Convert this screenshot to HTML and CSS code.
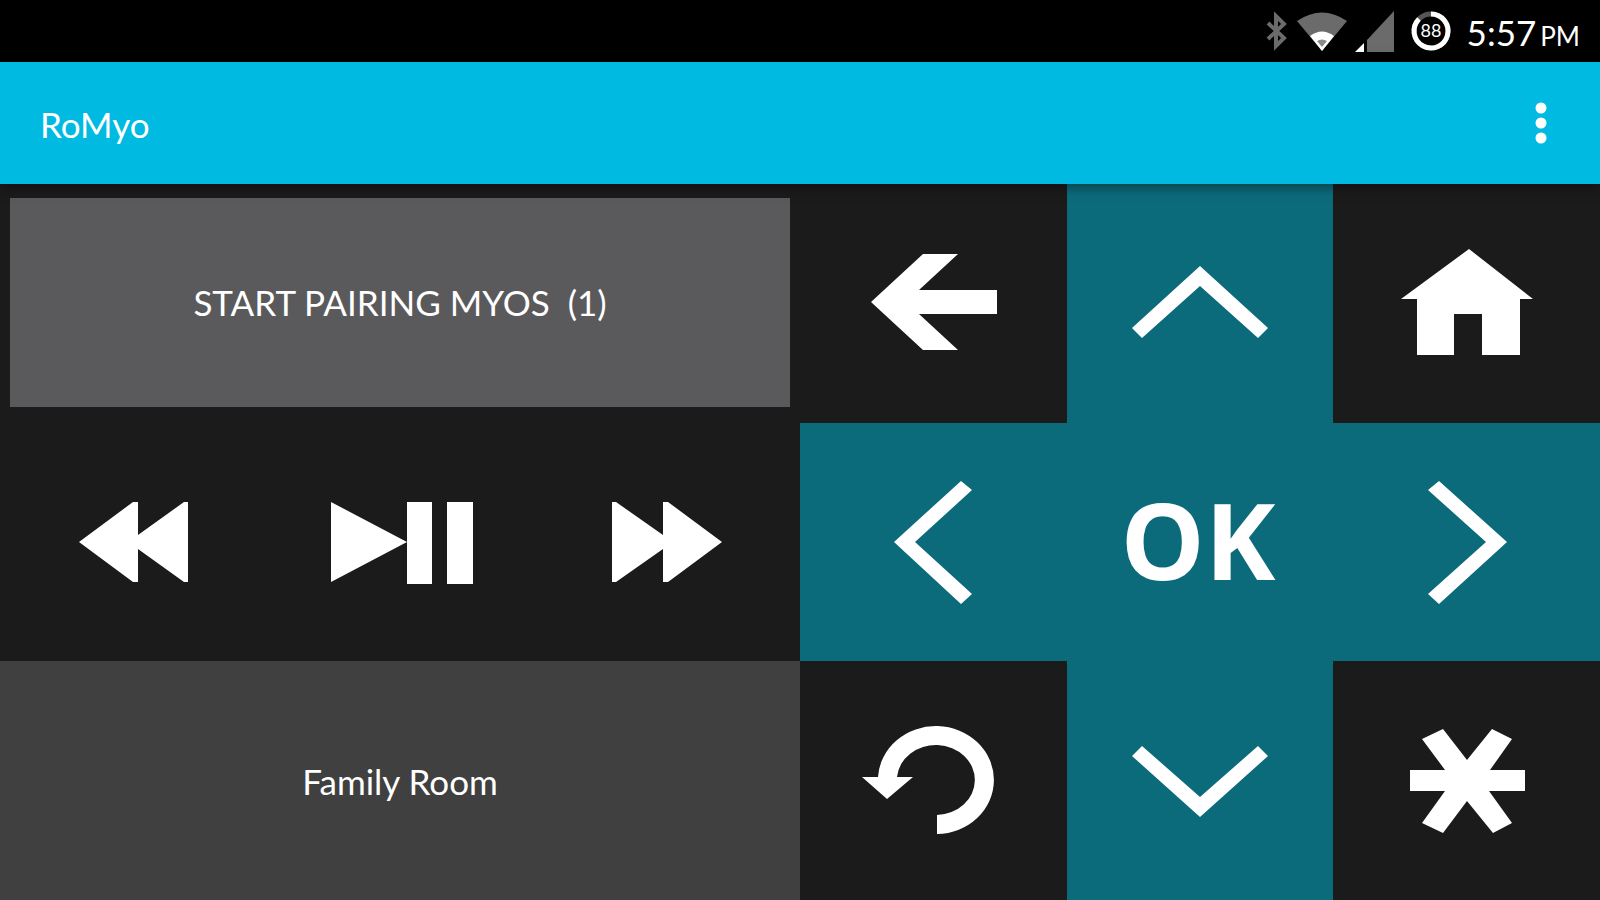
FILE: index.html
```html
<!DOCTYPE html>
<html lang="en">
<head>
    <meta charset="UTF-8">
    <meta name="viewport" content="width=device-width, initial-scale=1.0">
    <title>RoMyo</title>
    <link rel="stylesheet" href="styles.css">
</head>
<body>

    <div class="status-bar">
        <svg width="24" height="44" viewBox="0 0 24 44">
            <path d="M3 14 L19 29 L11 37 V7 L19 15 L3 30" fill="none" stroke="#6b6b6b" stroke-width="4"/>
        </svg>
        <svg width="50" height="44" viewBox="0 0 50 44">
            <path d="M0 12 Q25 -5 50 12 L25 42 Z" fill="#6b6b6b"/>
            <path d="M13 27 Q25 18 37 27 L25 42 Z" fill="#fff"/>
            <path d="M20 32 Q25 29 30 32 L25 38 Z" fill="#8a8a8a"/>
        </svg>
        <svg width="40" height="44" viewBox="0 0 40 44">
            <path d="M39 2 V43 H12 V31 Z" fill="#6b6b6b"/>
            <path d="M9 34 V43 H0 Z" fill="#fff"/>
        </svg>
        <svg width="56" height="44" viewBox="0 0 56 44">
            <circle cx="28" cy="22" r="17" fill="none" stroke="#555" stroke-width="5"/>
            <path d="M28 5 A17 17 0 1 1 16 10" fill="none" stroke="#fff" stroke-width="5"/>
            <text class="battery-level" x="28" y="28" text-anchor="middle">88</text>
        </svg>
        <div class="clock">5:57<span class="clock-period">PM</span></div>
    </div>

    <header class="app-bar">
        <h1 class="app-title">RoMyo</h1>
        <button class="menu-button" type="button" aria-label="More options">
            <svg width="12" height="42" viewBox="0 0 12 42">
                <circle cx="6" cy="5" r="5.5"/>
                <circle cx="6" cy="20" r="5.5"/>
                <circle cx="6" cy="35" r="5.5"/>
            </svg>
        </button>
    </header>

    <main class="remote">
        <section class="panel">
            <button class="pair-button" type="button">START PAIRING MYOS&nbsp; (1)</button>

            <div class="media-row">
                <button class="key" type="button" aria-label="Rewind">
                    <svg class="icon" viewBox="0 0 160 160"><path d="M26 80 L80 40 H85 V73 L131 40 H135 V120 H131 L85 87 V120 H80 Z"/></svg>
                </button>
                <button class="key" type="button" aria-label="Play or pause">
                    <svg class="icon" viewBox="0 0 160 160"><path d="M11 40 L87 80 L11 120 Z M87 40 H112 V122 H87 Z M127 40 H153 V122 H127 Z"/></svg>
                </button>
                <button class="key" type="button" aria-label="Fast forward">
                    <svg class="icon" viewBox="0 0 160 160"><path d="M25 40 H29 L76 73 V40 H81 L135 80 L81 120 H76 V87 L29 120 H25 Z"/></svg>
                </button>
            </div>

            <button class="device-button" type="button">Family Room</button>
        </section>

        <section class="pad">
            <button class="key" type="button" aria-label="Back">
                <svg class="icon" viewBox="0 0 160 160"><path d="M18 79 L70 31 H105 L66 67 H144 V91 H66 L105 127 H70 Z"/></svg>
            </button>
            <button class="key key-teal" type="button" aria-label="Up">
                <svg class="icon" viewBox="0 0 160 160"><path d="M80 43 L148 105 L138 115 L80 63 L22 115 L12 105 Z"/></svg>
            </button>
            <button class="key" type="button" aria-label="Home">
                <svg class="icon" viewBox="0 0 160 160"><path d="M82 26 L146 76 H133 V132 H95 V91 H67 V132 H30 V76 H14 Z"/></svg>
            </button>

            <button class="key key-teal" type="button" aria-label="Left">
                <svg class="icon" viewBox="0 0 160 160"><path d="M41 80 L108 19 L119 28 L62 80 L119 132 L108 142 Z"/></svg>
            </button>
            <button class="key key-teal key-ok" type="button">OK</button>
            <button class="key key-teal" type="button" aria-label="Right">
                <svg class="icon" viewBox="0 0 160 160"><path d="M120 80 L52 19 L41 28 L99 80 L41 132 L52 142 Z"/></svg>
            </button>

            <button class="key" type="button" aria-label="Replay">
                <svg class="icon" viewBox="0 0 160 160"><path d="M25 76 A58 54 0 1 1 84 133 V114 A39 35 0 1 0 44 76 H60 L34 98 L9 76 Z"/></svg>
            </button>
            <button class="key key-teal" type="button" aria-label="Down">
                <svg class="icon" viewBox="0 0 160 160"><path d="M12 55 L22 45 L80 96 L138 45 L148 55 L80 116 Z"/></svg>
            </button>
            <button class="key" type="button" aria-label="Options">
                <svg class="icon" viewBox="0 0 160 160"><path d="M23 69 H58 L35 38 L56 28 L80 59 L105 28 L125 38 L103 69 H138 V90 H102 L125 122 L106 132 L80 100 L56 132 L35 122 L58 90 H23 Z"/></svg>
            </button>
        </section>
    </main>

</body>
</html>
```
FILE: styles.css
```css
* {
    box-sizing: border-box;
}
body {
    display: flex;
    flex-direction: column;
    min-height: 100vh;
    margin: 0;
    background: #1b1b1b;
    color: #fff;
    font-family: Lato, "Open Sans", sans-serif;
    font-size: 35px;
}
button {
    padding: 0;
    border: none;
    background: none;
    color: inherit;
    font: inherit;
    cursor: pointer;
}
.status-bar {
    display: flex;
    align-items: center;
    justify-content: flex-end;
    gap: 8px;
    height: 62px;
    padding-right: 20px;
    background: #000;
}
.battery-level {
    fill: #fff;
    font-size: 18px;
}
.clock {
    padding-top: 6px;
    line-height: 44px;
}
.clock-period {
    margin-left: 4px;
    font-size: 26px;
}
.app-bar {
    position: relative;
    display: flex;
    align-items: center;
    justify-content: space-between;
    height: 122px;
    padding: 2px 39px 0 40px;
    background: #00bae2;
    box-shadow: 0 2px 12px rgba(0,0,0,0.5);
}
.app-title {
    margin: 0;
    font-size: 35px;
    font-weight: normal;
}
.menu-button {
    width: 40px;
    height: 60px;
}
.menu-button svg {
    display: block;
    margin: auto;
    overflow: visible;
    fill: #fff;
}
.remote {
    flex: 1;
    display: grid;
    grid-template-columns: 1fr 1fr;
}
.panel {
    display: grid;
    grid-template-rows: repeat(3, 1fr);
}
.pair-button {
    margin: 14px 10px 16px;
    background: #5a5a5c;
}
.media-row {
    display: grid;
    grid-template-columns: repeat(3, 1fr);
}
.device-button {
    background: #404040;
}
.pad {
    display: grid;
    grid-template-columns: repeat(3, 1fr);
    grid-template-rows: repeat(3, 1fr);
}
.key {
    display: flex;
    align-items: center;
    justify-content: center;
    background: #1b1b1b;
}
.key-teal {
    background: #0c6b7b;
}
.key-ok {
    padding: 0 4px 6px 0;
    font-family: "Open Sans", sans-serif;
    font-size: 106px;
    font-weight: bold;
    line-height: 120px;
}
.icon {
    width: 160px;
    height: 160px;
    fill: #fff;
}
```
